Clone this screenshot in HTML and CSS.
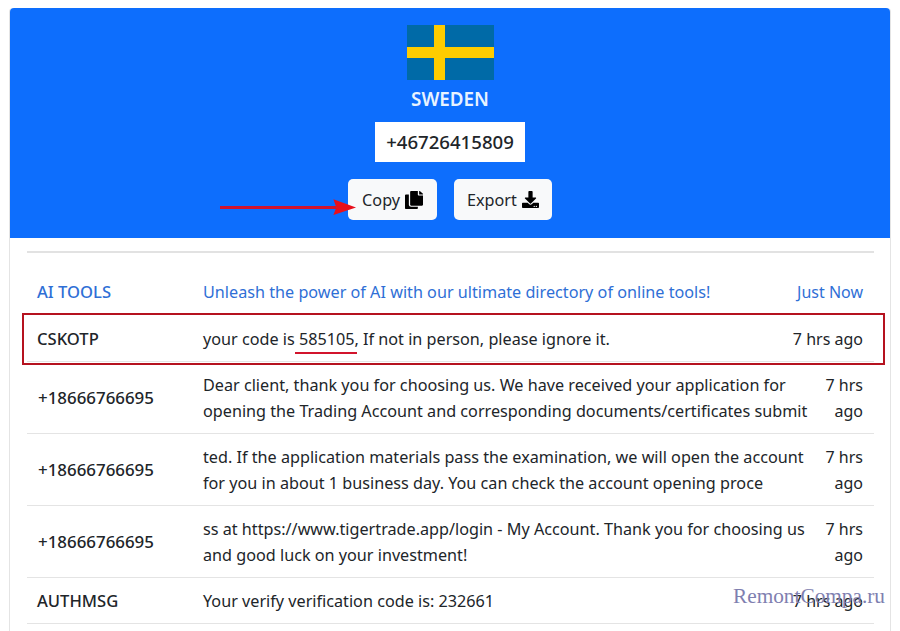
FILE: index.html
```html
<!DOCTYPE html>
<html lang="en">
<head>
    <meta charset="UTF-8">
    <title>Sweden number</title>
    <link rel="stylesheet" href="styles.css">
</head>
<body>
    <div class="card">
        <div class="head">
            <svg class="flag" viewBox="0 0 87 55"><rect width="87" height="55" fill="#006aa7"/><rect x="27" width="11" height="55" fill="#fecc00"/><rect y="22" width="87" height="11" fill="#fecc00"/></svg>
            <h1 class="country">SWEDEN</h1>
            <div class="phone">+46726415809</div>
            <div class="btns">
                <span class="btn">Copy
                    <svg class="ico ico-copy" viewBox="0 0 448 512" preserveAspectRatio="none"><path d="M320 448v40c0 13.255-10.745 24-24 24H24c-13.255 0-24-10.745-24-24V120c0-13.255 10.745-24 24-24h72v296c0 30.879 25.121 56 56 56h168zm0-344V0H152c-13.255 0-24 10.745-24 24v368c0 13.255 10.745 24 24 24h272c13.255 0 24-10.745 24-24V128H344c-13.2 0-24-10.8-24-24zm120.971-31.029L375.029 7.029A24 24 0 0 0 358.059 0H352v96h96v-6.059a24 24 0 0 0-7.029-16.97z"/></svg>
                </span>
                <span class="btn export">Export
                    <svg class="ico" viewBox="0 0 512 512"><path d="M216 0h80c13.3 0 24 10.7 24 24v168h87.7c17.8 0 26.7 21.5 14.1 34.1L269.7 378.3c-7.5 7.5-19.8 7.5-27.3 0L90.1 226.1c-12.6-12.6-3.7-34.1 14.1-34.1H192V24c0-13.3 10.7-24 24-24zm296 376v112c0 13.3-10.7 24-24 24H24c-13.3 0-24-10.7-24-24V376c0-13.3 10.7-24 24-24h146.7l49 49c20.1 20.1 52.5 20.1 72.6 0l49-49H488c13.3 0 24 10.7 24 24zm-124 88c0-11-9-20-20-20s-20 9-20 20 9 20 20 20 20-9 20-20zm64 0c0-11-9-20-20-20s-20 9-20 20 9 20 20 20 20-9 20-20z"/></svg>
                </span>
            </div>
        </div>
        <div class="list">
            <div class="row top link">
                <div class="from">AI TOOLS</div>
                <div class="msg">Unleash the power of AI with our ultimate directory of online tools!</div>
                <div class="time">Just Now</div>
            </div>
            <div class="row">
                <div class="from">CSKOTP</div>
                <div class="msg">your code is 585105, If not in person, please ignore it.</div>
                <div class="time">7 hrs ago</div>
            </div>
            <div class="row">
                <div class="from num">+18666766695</div>
                <div class="msg">Dear client, thank you for choosing us. We have received your application for<br>opening the Trading Account and corresponding documents/certificates submit</div>
                <div class="time thin">7 hrs ago</div>
            </div>
            <div class="row">
                <div class="from num">+18666766695</div>
                <div class="msg">ted. If the application materials pass the examination, we will open the account<br>for you in about 1 business day. You can check the account opening proce</div>
                <div class="time thin">7 hrs ago</div>
            </div>
            <div class="row">
                <div class="from num">+18666766695</div>
                <div class="msg">ss at https://www.tigertrade.app/login - My Account. Thank you for choosing us<br>and good luck on your investment!</div>
                <div class="time thin">7 hrs ago</div>
            </div>
            <div class="row">
                <div class="from">AUTHMSG</div>
                <div class="msg">Your verify verification code is: 232661</div>
                <div class="time">7 hrs ago</div>
            </div>
        </div>
    </div>

    <!-- marks drawn over the screenshot -->
    <svg class="arrow" viewBox="0 0 140 20"><path d="M0 9.5H118" stroke="#d2142c" stroke-width="3"/><path d="M115 1L138 9.5L115 17L118 9.5Z" fill="#e8101c"/></svg>
    <div class="redbox"></div>
    <div class="redline"></div>
    <div class="mark">RemontCompa.ru</div>
</body>
</html>
```

FILE: styles.css
```css
* {
    margin: 0;
    padding: 0;
    box-sizing: border-box;
}

html, body {
    height: 631px;
    overflow: hidden;
}

body {
    position: relative;
    background: #fff;
    padding: 8px 9px 0;
    font-family: "Noto Sans", "Open Sans", sans-serif;
    font-size: 16.2px;
    color: #212529;
}

.card {
    height: 640px;
    border: 1px solid #e4e4e4;
    border-top: 0;
    border-radius: 4px 4px 0 0;
}

.head {
    height: 230px;
    padding-top: 17px;
    background: #0d6efd;
    border-radius: 4px 4px 0 0;
    display: flex;
    flex-direction: column;
    align-items: center;
}

.flag {
    display: block;
    width: 87px;
    height: 55px;
}

.country {
    margin-top: 7px;
    line-height: 24px;
    font-size: 18.8px;
    font-weight: 600;
    color: #e8f3ff;
}

.phone {
    margin-top: 11px;
    width: 150px;
    height: 40px;
    line-height: 40px;
    text-align: center;
    background: #fff;
    font-size: 18.6px;
    font-weight: 500;
}

.btns {
    margin-top: 17px;
    display: flex;
    gap: 17px;
}

.btn {
    height: 41px;
    padding: 0 14px;
    display: flex;
    align-items: center;
    gap: 5px;
    background: #f8f9fa;
    border-radius: 5px;
    color: #212529;
}

.btn.export {
    padding: 0 13px;
}

.ico {
    width: 17px;
    height: 17px;
}

.ico-copy {
    width: 18px;
    height: 18px;
}

.list {
    margin: 13px 16px 0 17px;
    border-top: 2px solid #e2e2e2;
    padding-top: 16px;
}

.row {
    display: flex;
    border-bottom: 1px solid #e4e4e4;
    padding: 10px 11px 9px 10px;
    line-height: 26px;
}

.row.top {
    border-bottom: 0;
    padding-bottom: 11px;
}

.link {
    color: #2f6fd6;
}

.from {
    width: 166px;
    flex: none;
    font-size: 16.6px;
    font-weight: 500;
    align-self: center;
}

.from.num {
    padding-left: 1px;
    font-size: 16.9px;
}

.msg {
    flex: 1;
    white-space: nowrap;
}

.time {
    flex: none;
    font-size: 16px;
    text-align: right;
}

.time.thin {
    width: 38px;
}

.redbox {
    position: absolute;
    left: 22px;
    top: 313px;
    width: 863px;
    height: 52px;
    border: 2px solid #b5121f;
}

.redline {
    position: absolute;
    left: 295px;
    top: 352px;
    width: 62px;
    height: 2px;
    background: #d2142c;
}

.arrow {
    position: absolute;
    left: 220px;
    top: 198px;
    width: 138px;
    height: 20px;
}

.mark {
    position: absolute;
    left: 733px;
    top: 584px;
    font-family: "Liberation Serif", serif;
    font-size: 21.3px;
    color: #7f7fb0;
}
```
